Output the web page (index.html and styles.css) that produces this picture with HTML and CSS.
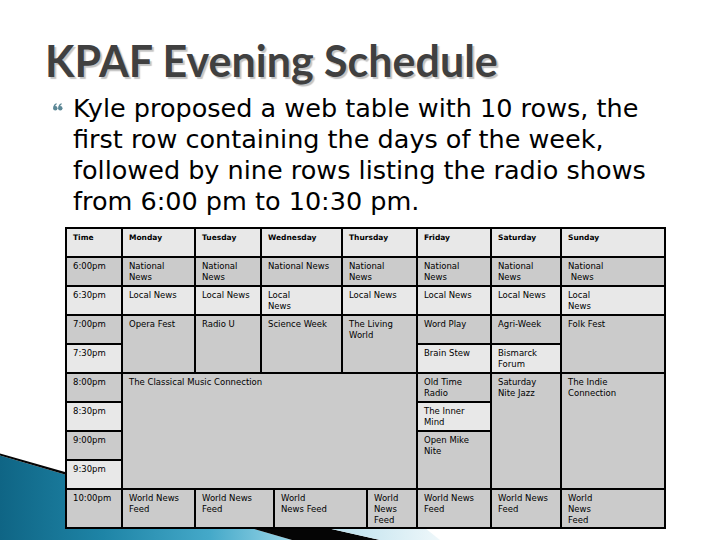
FILE: index.html
```html
<!DOCTYPE html>
<html>
<head>
<meta charset="utf-8">
<link rel="stylesheet" href="styles.css">
</head>
<body>
<svg class="decor" width="720" height="540" viewBox="0 0 720 540">
  <defs>
    <linearGradient id="teal" x1="0" y1="0" x2="1" y2="0" gradientUnits="objectBoundingBox">
      <stop offset="0" stop-color="#0f6585"/>
      <stop offset="0.35" stop-color="#1e84a6"/>
      <stop offset="0.72" stop-color="#45a9c9"/>
      <stop offset="1" stop-color="#9ad6e8"/>
    </linearGradient>
    <linearGradient id="pale" x1="0" y1="0" x2="1" y2="0">
      <stop offset="0" stop-color="#b9dfec"/>
      <stop offset="1" stop-color="#eef7fa"/>
    </linearGradient>
  </defs>
  <path d="M0,455.5 L65,474.5 L292,540 L0,540 Z" fill="url(#teal)"/>
  <path d="M0,453.5 L65,472 L327,528 L380,540 L292,540 L65,474.5 L0,455.5 Z" fill="#050505"/>
  <path d="M327,528 L425,528 L440,540 L380,540 Z" fill="url(#pale)"/>
</svg>
<div class="slide">
  <h1 class="title">KPAF Evening Schedule</h1>
  <div class="point">
    <span class="bullet"><svg width="10" height="8" viewBox="0 0 10 8"><circle cx="2.3" cy="5.3" r="2.2" fill="#5b8796"/><path d="M0.3,5 C0.3,2.5 1.6,0.8 3.6,0.3 L3.8,1.2 C2.6,1.7 2,2.8 2,4 Z" fill="#5b8796"/><circle cx="7.3" cy="5.3" r="2.2" fill="#5b8796"/><path d="M5.3,5 C5.3,2.5 6.6,0.8 8.6,0.3 L8.8,1.2 C7.6,1.7 7,2.8 7,4 Z" fill="#5b8796"/></svg></span>
    <p class="text">Kyle proposed a web table with 10 rows, the<br>first row containing the days of the week,<br>followed by nine rows listing the radio shows<br>from 6:00 pm to 10:30 pm.</p>
  </div>
  <div class="sched">
    <div class="grid">
      <div class="c hd">Time</div>
      <div class="c hd">Monday</div>
      <div class="c hd">Tuesday</div>
      <div class="c hd">Wednesday</div>
      <div class="c hd">Thursday</div>
      <div class="c hd">Friday</div>
      <div class="c hd">Saturday</div>
      <div class="c hd">Sunday</div>

      <div class="c dk">6:00pm</div>
      <div class="c dk">National<br>News</div>
      <div class="c dk">National<br>News</div>
      <div class="c dk">National News</div>
      <div class="c dk">National<br>News</div>
      <div class="c dk">National<br>News</div>
      <div class="c dk">National<br>News</div>
      <div class="c dk">National<br>&nbsp;News</div>

      <div class="c lt">6:30pm</div>
      <div class="c lt">Local News</div>
      <div class="c lt">Local News</div>
      <div class="c lt">Local<br>News</div>
      <div class="c lt">Local News</div>
      <div class="c lt">Local News</div>
      <div class="c lt">Local News</div>
      <div class="c lt">Local<br>News</div>

      <div class="c dk">7:00pm</div>
      <div class="c dk r2">Opera Fest</div>
      <div class="c dk r2">Radio U</div>
      <div class="c dk r2">Science Week</div>
      <div class="c dk r2">The Living<br>World</div>
      <div class="c dk">Word Play</div>
      <div class="c dk">Agri-Week</div>
      <div class="c dk r2">Folk Fest</div>

      <div class="c lt">7:30pm</div>
      <div class="c lt">Brain Stew</div>
      <div class="c lt">Bismarck<br>Forum</div>

      <div class="c dk">8:00pm</div>
      <div class="c dk wide">The Classical Music Connection</div>
      <div class="c dk">Old Time<br>Radio</div>
      <div class="c dk r4">Saturday<br>Nite Jazz</div>
      <div class="c dk r4">The Indie<br>Connection</div>

      <div class="c lt">8:30pm</div>
      <div class="c lt">The Inner<br>Mind</div>

      <div class="c dk">9:00pm</div>
      <div class="c dk r2">Open Mike<br>Nite</div>

      <div class="c lt">9:30pm</div>
    </div>
    <div class="last">
      <div class="c dk">10:00pm</div>
      <div class="c dk">World News<br>Feed</div>
      <div class="c dk">World News<br>Feed</div>
      <div class="c dk">World<br>News Feed</div>
      <div class="c dk">World<br>News<br>Feed</div>
      <div class="c dk">World News<br>Feed</div>
      <div class="c dk">World News<br>Feed</div>
      <div class="c dk">World<br>News<br>Feed</div>
    </div>
  </div>
</div>
</body>
</html>
```
FILE: styles.css
```css
body {
  margin: 0;
  width: 720px;
  height: 540px;
  overflow: hidden;
  position: relative;
  background: #ffffff;
}

.decor {
  position: absolute;
  left: 0;
  top: 0;
  z-index: 0;
}

.slide {
  position: relative;
  z-index: 1;
  padding-top: 36px;
}

.title {
  margin: 0;
  padding-left: 45px;
  font-family: Lato, "Liberation Sans", sans-serif;
  font-weight: bold;
  font-size: 43px;
  line-height: 49px;
  color: #404040;
  text-shadow: 2px 2px 1px #c4c4c4;
}

.point {
  display: flex;
  margin-top: 8px;
}

.bullet {
  width: 20px;
  margin-left: 53px;
  padding-top: 10px;
  flex: none;
  line-height: 0;
}

.text {
  margin: 0;
  font-family: "DejaVu Sans", sans-serif;
  font-size: 25.5px;
  line-height: 31px;
  color: #000000;
}

.sched {
  margin-top: 10px;
  margin-left: 65px;
  width: 597px;
  padding: 2px;
  background: #000000;
  display: flex;
  flex-direction: column;
  gap: 2px;
}

.grid {
  display: grid;
  grid-template-columns: 54px 71px 64px 79px 73px 72px 68px 102px;
  grid-auto-rows: 27px;
  gap: 2px;
}

.last {
  display: grid;
  grid-template-columns: 54px 71px 77px 91px 48px 72px 68px 102px;
  grid-auto-rows: 37px;
  gap: 2px;
}

.c {
  font-family: "DejaVu Sans", sans-serif;
  font-size: 8.5px;
  line-height: 11px;
  color: #000000;
  padding: 3px 2px 0 6px;
  white-space: nowrap;
  overflow: hidden;
}

.hd {
  background: #e8e8e8;
  font-weight: bold;
  font-size: 7.5px;
}

.dk {
  background: #cbcbcb;
}

.lt {
  background: #e8e8e8;
}

.r2 {
  grid-row: span 2;
}

.r4 {
  grid-row: span 4;
}

.wide {
  grid-column: span 4;
  grid-row: span 4;
}
```
